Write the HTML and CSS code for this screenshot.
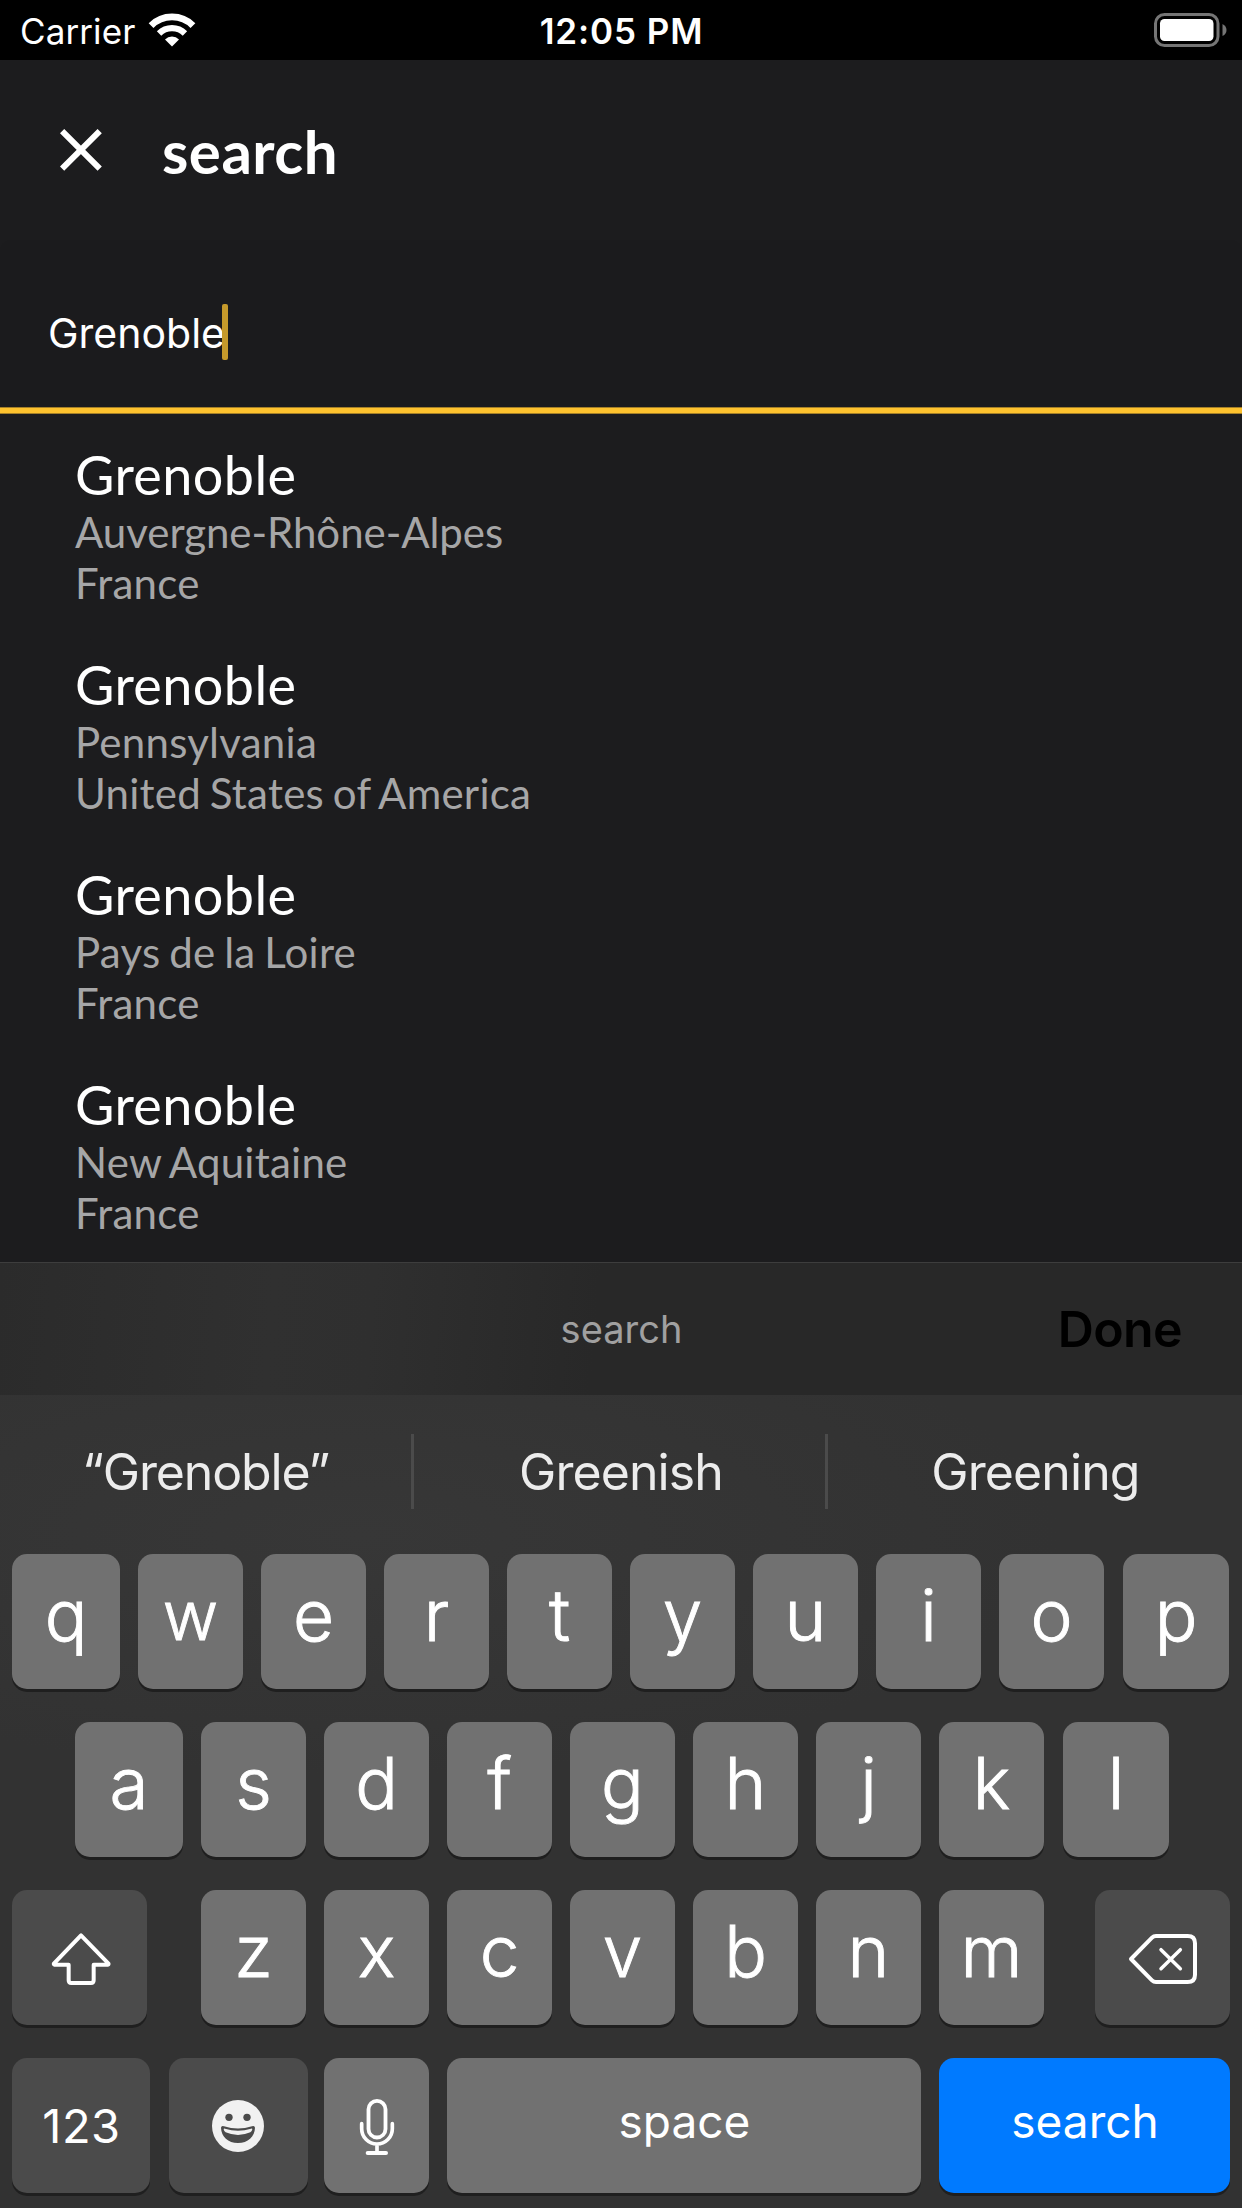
FILE: index.html
```
<!DOCTYPE html>
<html lang="en">
<head>
<meta charset="utf-8">
<title>search</title>
<link rel="stylesheet" href="styles.css">
</head>
<body>
<div class="screen">
  <div class="status">
    <div class="status-left">
      <span class="carrier">Carrier</span>
      <svg class="wifi" width="48" height="36" viewBox="0 0 48 36">
        <path d="M3.07 13.57a29.6 29.6 0 0 1 41.86 0" fill="none" stroke="#fff" stroke-width="6.8"/>
        <path d="M11.06 21.56a18.3 18.3 0 0 1 25.88 0" fill="none" stroke="#fff" stroke-width="6.2"/>
        <path d="M24 34.5l-7-7.1a10 10 0 0 1 14 0z" fill="#fff"/>
      </svg>
    </div>
    <span class="time">12:05 PM</span>
    <div class="status-right">
      <svg width="74" height="36" viewBox="0 0 74 36">
        <rect x="1.5" y="1.5" width="62.5" height="31" rx="9" fill="none" stroke="#757575" stroke-width="3"/>
        <rect x="6" y="6" width="53.5" height="22" rx="4.5" fill="#fff"/>
        <path d="M68.5 11q4 2 4 6t-4 6z" fill="#757575"/>
      </svg>
    </div>
  </div>

  <header class="header">
    <svg class="close" width="42" height="42" viewBox="0 0 42 42"><path d="M2.1 2.1l37.6 37.6M39.7 2.1L2.1 39.7" stroke="#fff" stroke-width="6"/></svg>
    <h1 class="title">search</h1>
  </header>

  <div class="field"><span class="value">Grenoble</span><i class="caret"></i></div>

  <ul class="results">
    <li class="result"><div class="city">Grenoble</div><div class="place hyphenated">Auvergne-Rhône-Alpes</div><div class="place">France</div></li>
    <li class="result"><div class="city">Grenoble</div><div class="place">Pennsylvania</div><div class="place">United States of America</div></li>
    <li class="result"><div class="city">Grenoble</div><div class="place">Pays de la Loire</div><div class="place">France</div></li>
    <li class="result"><div class="city">Grenoble</div><div class="place">New Aquitaine</div><div class="place">France</div></li>
  </ul>

  <div class="accessory"><span class="hint">search</span><span class="done">Done</span></div>

  <div class="keyboard">
    <div class="suggestions">
      <span class="word quoted">“Grenoble”</span><span class="word center">Greenish</span><span class="word last">Greening</span>
    </div>
    <div class="row">
      <span class="key first">q</span><span class="key w">w</span><span class="key">e</span><span class="key">r</span><span class="key">t</span><span class="key">y</span><span class="key">u</span><span class="key">i</span><span class="key">o</span><span class="key end">p</span>
    </div>
    <div class="row middle">
      <span class="key first">a</span><span class="key">s</span><span class="key">d</span><span class="key">f</span><span class="key">g</span><span class="key">h</span><span class="key">j</span><span class="key">k</span><span class="key end">l</span>
    </div>
    <div class="row">
      <span class="key dark shift"><svg width="60" height="54" viewBox="34 36 180 162"><path d="M124 46L42.500 131Q42 134 45 134.500H87V181Q87 189 95 189H154Q162 189 162 181V134.500H204Q207 134 206.500 131Z" fill="none" stroke="#fff" stroke-width="12" stroke-linejoin="round"/></svg></span>
      <span class="key">z</span><span class="key">x</span><span class="key">c</span><span class="key">v</span><span class="key">b</span><span class="key">n</span><span class="key">m</span>
      <span class="key dark delete"><svg width="70" height="52" viewBox="24 39 210 156"><path d="M33 117L96 53Q101 48 108 48H203Q225 48 225 70V164Q225 186 203 186H108Q101 186 96 181Z" fill="none" stroke="#fff" stroke-width="12" stroke-linejoin="round"/><path d="M123 89L181 146M181 89L123 146" stroke="#fff" stroke-width="10.500" stroke-linecap="round"/></svg></span>
    </div>
    <div class="row">
      <span class="key dark numbers">123</span>
      <span class="key dark emoji"><svg width="52" height="52" viewBox="36 30 156 156"><circle cx="114" cy="108" r="78" fill="#f1f1f1"/><circle cx="87" cy="82" r="11" fill="#4b4b4b"/><circle cx="141" cy="82" r="11" fill="#4b4b4b"/><path d="M63 113Q64 106 72 109Q114 122 156 109Q164 106 165 113C164 140 144 159 114 159S64 140 63 113Z" fill="#4b4b4b"/><path d="M71 118Q71 115 75 116Q114 128 153 116Q157 115 157 118Q156 124 151 127Q114 143 77 127Q72 124 71 118Z" fill="#f1f1f1"/></svg></span>
      <span class="key mic"><svg width="36" height="58" viewBox="479 24 108 174"><rect x="507.500" y="32.500" width="51" height="110" rx="25.500" fill="none" stroke="#fff" stroke-width="11.500"/><path d="M487 101V116a46 46 0 0 0 92 0V101M533 163V188" fill="none" stroke="#fff" stroke-width="11" stroke-linecap="round"/><path d="M505 189H560" stroke="#fff" stroke-width="12" stroke-linecap="round"/></svg></span>
      <span class="key space">space</span>
      <span class="key go">search</span>
    </div>
  </div>
</div>
</body>
</html>
```
FILE: styles.css
```
* { box-sizing: border-box; }
body { margin: 0; background: #1c1c1e; }
.screen {
  width: 1242px;
  height: 2208px;
  overflow: hidden;
  display: flex;
  flex-direction: column;
  background: #1c1c1e;
  color: #fff;
  font-family: Inter, "Liberation Sans", sans-serif;
}
svg { display: block; flex: none; }

.status {
  height: 60px;
  padding-top: 1px;
  display: grid;
  grid-template-columns: 1fr auto 1fr;
  background: #000;
  font-size: 35px;
  line-height: 60px;
}
.status-left { display: flex; padding-left: 20px; }
.carrier { width: 128px; letter-spacing: 0.1px; }
.wifi { margin-top: 11px; }
.time { padding-left: 1px; font-weight: 600; letter-spacing: 0.9px; }
.status-right { display: flex; justify-content: flex-end; padding: 12px 14.5px 0 0; }

.header { height: 180px; display: flex; align-items: center; padding-left: 60px; gap: 60px; }
.title { margin: 0; padding-top: 2px; font: 700 60px/72px Lato, sans-serif; letter-spacing: 0.5px; }

.field {
  height: 174px;
  display: flex;
  align-items: center;
  padding: 18px 0 0 48px;
  border-radius: 12px 12px 0 0;
  background: linear-gradient(#a58028 1px, #fec22e 1px 6px, #a58028 6px) bottom / 100% 7px no-repeat #1b1b1d;
  font-size: 41px;
  line-height: 58px;
}
.value { width: 174px; height: 64px; letter-spacing: 0; }
.caret { width: 6px; height: 56px; margin-bottom: 8px; border-radius: 2px; background: #c69a2b; }

.results {
  flex: 1;
  margin: 0;
  padding: 29px 0 0 75px;
  list-style: none;
  display: flex;
  flex-direction: column;
  gap: 44px;
  font-family: Lato, sans-serif;
}
.result { height: 166px; }
.city { font-size: 54px; line-height: 64px; letter-spacing: 0.4px; }
.place { font-size: 42px; line-height: 51px; letter-spacing: 0.25px; word-spacing: -2.2px; color: #a6a6a7; }
.hyphenated { letter-spacing: -0.05px; }

.accessory {
  height: 133px;
  display: grid;
  grid-template-columns: 1fr auto 1fr;
  align-items: center;
  border-top: 1px solid #3d3d3d;
  background: linear-gradient(95deg, #2b2b2b 0%, #303030 22%, #2f2f2f 30%, #282828 48%, #282828 100%);
}
.hint { grid-column: 2; padding-left: 1px; font-size: 38px; letter-spacing: 0; color: #a0a0a0; }
.done { justify-self: end; padding-right: 60px; font-size: 50px; font-weight: 600; letter-spacing: -0.6px; color: #000; }

.keyboard {
  height: 813px;
  background: radial-gradient(ellipse 700px 240px at 360px 140px, #373737, #323232);
}
.suggestions { display: flex; height: 159px; padding-bottom: 6px; align-items: center; }
.word {
  width: 414px;
  height: 75px;
  border-right: 3px solid #4b4b4b;
  text-align: center;
  font-size: 50px;
  line-height: 76px;
  letter-spacing: -0.9px;
  color: #ececec;
}
.quoted { letter-spacing: -1.15px; }
.center { padding-left: 3px; }
.last { padding-left: 1px; border-right: 0; }

.row { display: flex; gap: 18px; height: 168px; padding-left: 12px; }
.middle { padding-left: 75px; }
.key {
  width: 105px;
  height: 135px;
  flex: none;
  display: flex;
  align-items: center;
  justify-content: center;
  padding-bottom: 13px;
  border-radius: 15px;
  background: #717171;
  box-shadow: 0 3px 0 #1f1f1f;
  font-size: 71px;
  font-weight: 300;
  -webkit-text-stroke: 0.9px #fff;
}
.w { font-size: 68px; }
.first { width: 108px; }
.end { width: 106px; margin-left: 1px; }
.dark { background: #4b4b4b; }
.shift { width: 135px; margin-right: 36px; padding: 3px 0 0 3px; }
.delete { width: 135px; margin-left: 33px; padding: 3px 0 0 1px; }
.numbers, .space, .go { font-weight: 400; -webkit-text-stroke: 0; }
.numbers { width: 138px; padding: 0 0 1px 1px; font-size: 47px; letter-spacing: 0.5px; }
.emoji { width: 139px; margin: 0 -2px 0 1px; padding: 1px 1px 0 0; }
.mic { padding: 3px 0 0 1px; }
.space, .go { padding: 0 0 10px 1px; font-size: 46px; }
.space { width: 474px; }
.go { width: 291px; background: #007aff; }
```
